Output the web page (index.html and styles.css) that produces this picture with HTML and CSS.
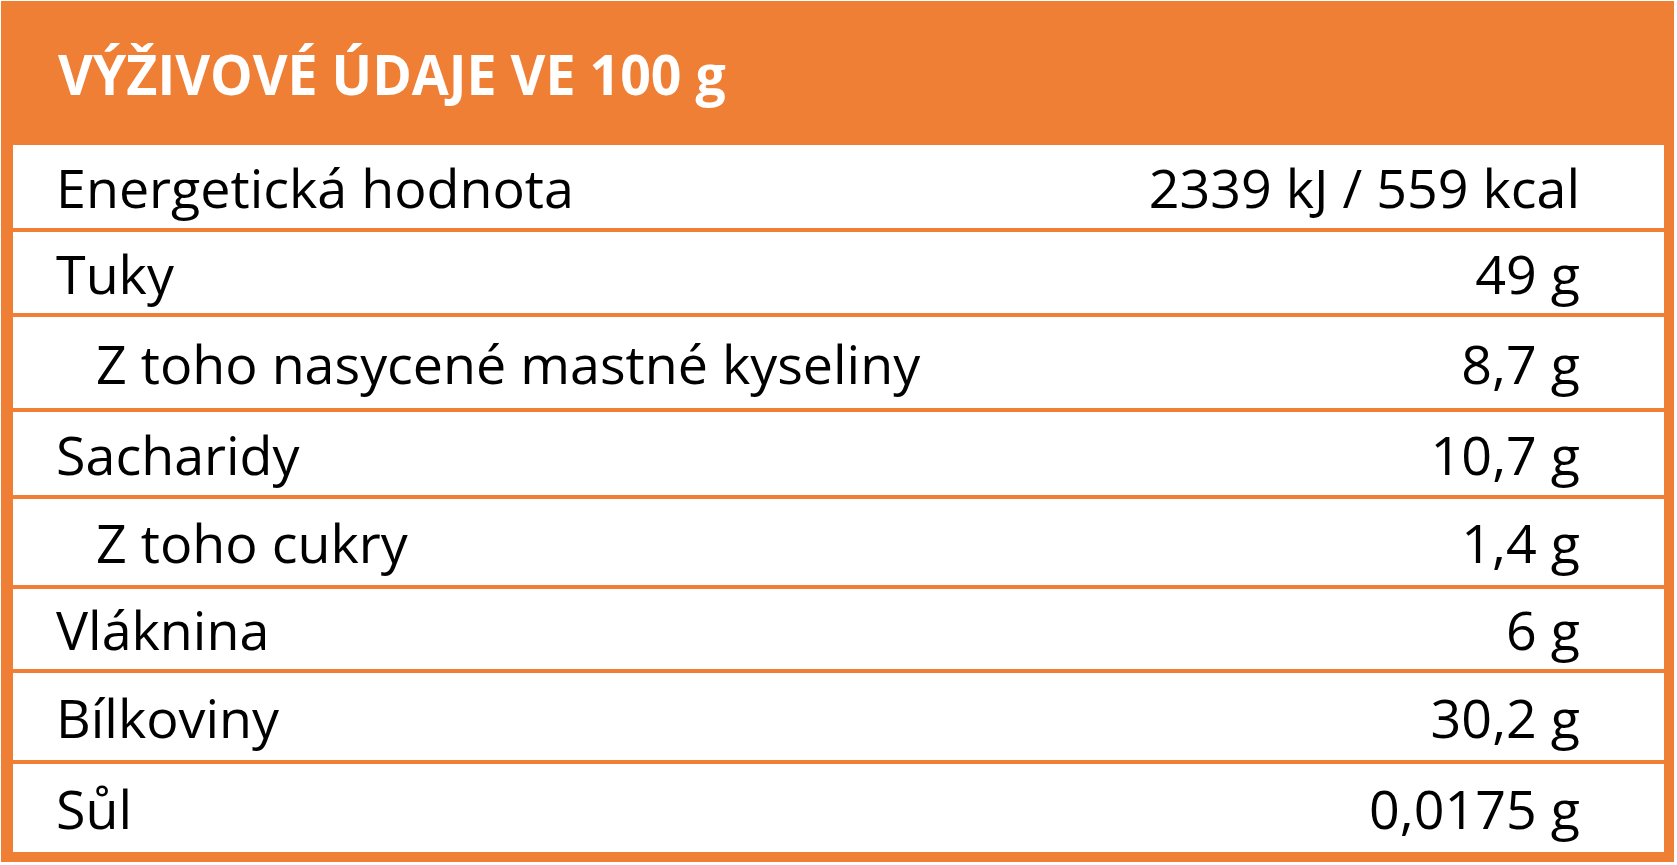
FILE: index.html
```html
<!DOCTYPE html>
<html lang="cs">
<head>
<meta charset="utf-8">
<title>Výživové údaje</title>
<link rel="stylesheet" href="styles.css">
</head>
<body>
<div class="card">
  <div class="card-header"><h1 class="title">VÝŽIVOVÉ ÚDAJE VE 100 g</h1></div>
  <div class="rows">
    <div class="row"><span class="label">Energetická hodnota</span><span class="value">2339 kJ / 559 kcal</span></div>
    <div class="row"><span class="label">Tuky</span><span class="value">49 g</span></div>
    <div class="row sub"><span class="label">Z toho nasycené mastné kyseliny</span><span class="value">8,7 g</span></div>
    <div class="row"><span class="label">Sacharidy</span><span class="value">10,7 g</span></div>
    <div class="row sub"><span class="label">Z toho cukry</span><span class="value">1,4 g</span></div>
    <div class="row"><span class="label">Vláknina</span><span class="value">6 g</span></div>
    <div class="row"><span class="label">Bílkoviny</span><span class="value">30,2 g</span></div>
    <div class="row"><span class="label">Sůl</span><span class="value">0,0175 g</span></div>
  </div>
</div>
</body>
</html>
```
FILE: styles.css
```css
html, body {
  margin: 0;
  padding: 0;
  background: #ffffff;
}
body {
  font-family: "Open Sans", "Noto Sans", sans-serif;
  color: #000000;
}
.card {
  margin: 1px 0 0 1px;
  width: 1673px;
  box-sizing: border-box;
  background: #ef7f34;
  padding: 0 10px 10px 12px;
}
.card-header {
  height: 144px;
  box-sizing: border-box;
  padding: 34px 0 0 45px;
}
.title {
  margin: 0;
  font-size: 56px;
  line-height: 76px;
  font-weight: 700;
  color: #ffffff;
  white-space: nowrap;
  transform: scaleX(0.958);
  transform-origin: left center;
}
.rows {
  display: flex;
  flex-direction: column;
  gap: 4px;
}
.row {
  display: flex;
  align-items: center;
  justify-content: space-between;
  background: #ffffff;
  padding: 0 84px 0 43px;
  font-size: 53.8px;
  white-space: nowrap;
}
.row.sub .label { padding-left: 40px; }
.row:nth-child(1) { height: 83px; }
.row:nth-child(2) { height: 81px; }
.row:nth-child(3) { height: 91px; }
.row:nth-child(4) { height: 83px; }
.row:nth-child(5) { height: 86px; }
.row:nth-child(6) { height: 80px; }
.row:nth-child(7) { height: 87px; }
.row:nth-child(8) { height: 88px; }
```
